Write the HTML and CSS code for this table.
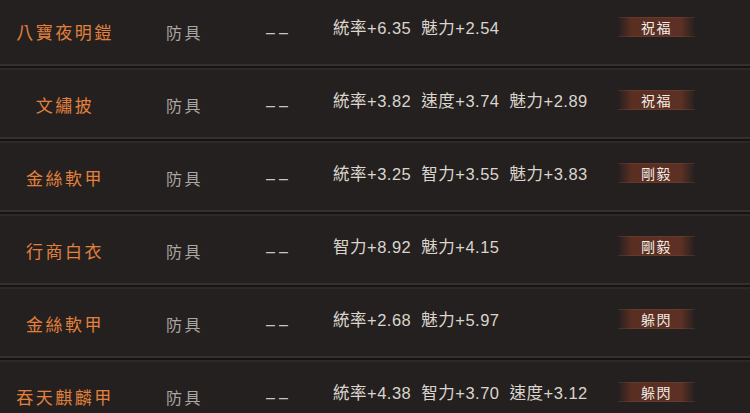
FILE: index.html
```html
<!DOCTYPE html>
<html lang="zh-Hant">
<head>
<meta charset="utf-8">
<link rel="stylesheet" href="styles.css">
</head>
<body>
<div class="list">
  <div class="row">
    <div class="name">八寶夜明鎧</div>
    <div class="type">防具</div>
    <div class="dash">––</div>
    <div class="stats"><span>統率+6.35</span><span>魅力+2.54</span></div>
    <div class="badge-cell"><span class="badge">祝福</span></div>
  </div>
  <div class="row">
    <div class="name">文繡披</div>
    <div class="type">防具</div>
    <div class="dash">––</div>
    <div class="stats"><span>統率+3.82</span><span>速度+3.74</span><span>魅力+2.89</span></div>
    <div class="badge-cell"><span class="badge">祝福</span></div>
  </div>
  <div class="row">
    <div class="name">金絲軟甲</div>
    <div class="type">防具</div>
    <div class="dash">––</div>
    <div class="stats"><span>統率+3.25</span><span>智力+3.55</span><span>魅力+3.83</span></div>
    <div class="badge-cell"><span class="badge">剛毅</span></div>
  </div>
  <div class="row">
    <div class="name">行商白衣</div>
    <div class="type">防具</div>
    <div class="dash">––</div>
    <div class="stats"><span>智力+8.92</span><span>魅力+4.15</span></div>
    <div class="badge-cell"><span class="badge">剛毅</span></div>
  </div>
  <div class="row">
    <div class="name">金絲軟甲</div>
    <div class="type">防具</div>
    <div class="dash">––</div>
    <div class="stats"><span>統率+2.68</span><span>魅力+5.97</span></div>
    <div class="badge-cell"><span class="badge">躲閃</span></div>
  </div>
  <div class="row">
    <div class="name">吞天麒麟甲</div>
    <div class="type">防具</div>
    <div class="dash">––</div>
    <div class="stats"><span>統率+4.38</span><span>智力+3.70</span><span>速度+3.12</span></div>
    <div class="badge-cell"><span class="badge">躲閃</span></div>
  </div>
</div>
</body>
</html>
```
FILE: styles.css
```css
html, body {
  margin: 0;
  padding: 0;
  background: #24201f;
  overflow: hidden;
}
body {
  width: 750px;
  height: 413px;
  font-family: "Liberation Sans", "Noto Sans CJK TC", sans-serif;
}
.list {
  margin-top: -3px;
  display: flex;
  flex-direction: column;
}
.row {
  box-sizing: border-box;
  height: 73px;
  padding-bottom: 6px;
  display: grid;
  grid-template-columns: 128px 138px 67px 285px 77px;
  align-items: center;
  background: linear-gradient(to top, #2f2826 0, #2f2826 2px, #161312 2px, #161312 4px, #36302d 4px, #36302d 6px, transparent 6px);
}
.name {
  text-align: center;
  color: #e3803d;
  font-family: "Noto Sans CJK TC", sans-serif;
  font-size: 17px;
  letter-spacing: 2.5px;
  padding-left: 2px;
  padding-top: 2px;
}
.type {
  padding-left: 38px;
  color: #aaa6a2;
  font-family: "Noto Sans CJK TC", sans-serif;
  font-size: 16px;
  letter-spacing: 2.5px;
  padding-top: 2px;
}
.dash {
  color: #c9c5c1;
  font-size: 16px;
  letter-spacing: 4px;
  padding-top: 4px;
}
.stats {
  display: flex;
  gap: 10px;
  color: #dad5cd;
  font-size: 16.5px;
  letter-spacing: 0.5px;
  padding-bottom: 7px;
}
.badge-cell {
  padding-bottom: 8px;
}
.badge {
  display: block;
  height: 20px;
  line-height: 20px;
  text-align: center;
  color: #f1ece5;
  font-family: "Noto Sans CJK TC", sans-serif;
  font-size: 14px;
  letter-spacing: 1.5px;
  background: linear-gradient(to right, rgba(90,46,33,0) 0, #5a2f22 18%, #5c3024 82%, rgba(90,46,33,0) 100%);
  box-shadow: inset 0 1px 0 rgba(140,90,70,0.25), inset 0 -1px 0 rgba(140,90,70,0.25);
}
```
